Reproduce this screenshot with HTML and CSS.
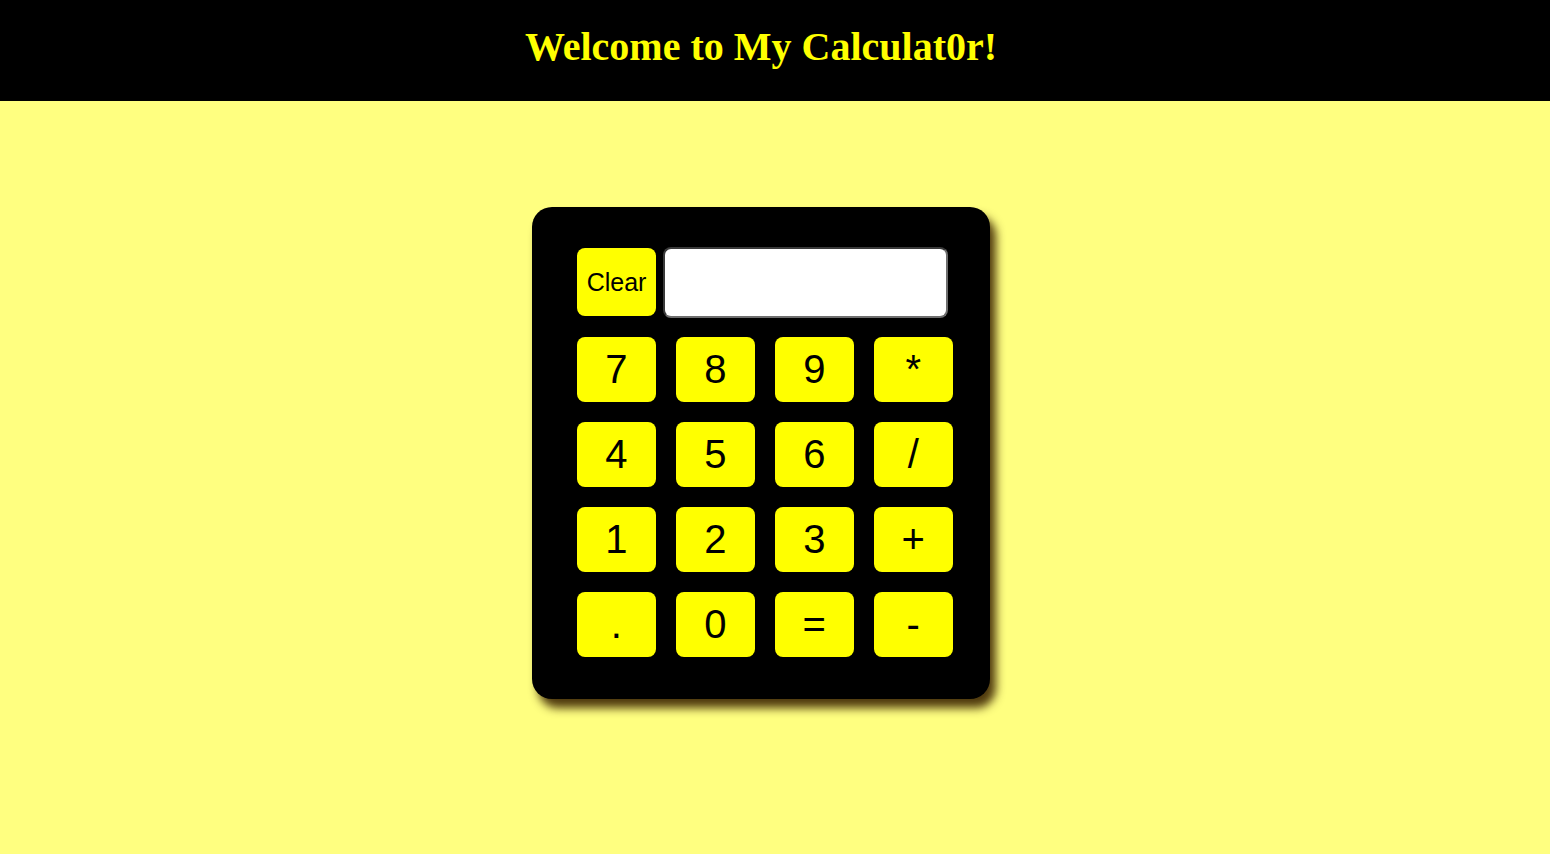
FILE: index.html
```html
<!DOCTYPE html>
<html>
<head>
<meta charset="utf-8">
<title>Calculator</title>
<link rel="stylesheet" href="styles.css">
</head>
<body>
<header class="topbar">
  <h1 class="title">Welcome to My Calculat0r!</h1>
</header>
<main class="stage">
  <div class="calc">
    <div class="top-row">
      <button class="key key-clear">Clear</button>
      <input class="display" type="text">
    </div>
    <div class="keys">
      <button class="key">7</button>
      <button class="key">8</button>
      <button class="key">9</button>
      <button class="key">*</button>
      <button class="key">4</button>
      <button class="key">5</button>
      <button class="key">6</button>
      <button class="key">/</button>
      <button class="key">1</button>
      <button class="key">2</button>
      <button class="key">3</button>
      <button class="key">+</button>
      <button class="key">.</button>
      <button class="key">0</button>
      <button class="key">=</button>
      <button class="key">-</button>
    </div>
  </div>
</main>
</body>
</html>
```
FILE: styles.css
```css
html, body {
  margin: 0;
  padding: 0;
}
body {
  background: #ffff80;
  font-family: "Liberation Sans", Arial, sans-serif;
  min-height: 854px;
}
.topbar {
  background: #000;
  height: 101px;
  box-sizing: border-box;
  padding: 24px 28px 0 0;
}
.title {
  margin: 0;
  text-align: center;
  font-family: "Liberation Serif", "Times New Roman", serif;
  font-weight: bold;
  font-size: 40px;
  line-height: 46px;
  color: #ffff00;
}
.stage {
  display: flex;
  justify-content: center;
  padding: 106px 28px 0 0;
}
.calc {
  background: #000;
  border-radius: 20px;
  width: 458px;
  height: 492px;
  box-sizing: border-box;
  padding: 40px 38px 0 45px;
  box-shadow: 6px 9px 10px rgba(60, 35, 0, 0.9);
}
.top-row {
  display: flex;
  align-items: flex-start;
  gap: 7px;
  height: 90px;
}
.key {
  background: #ffff00;
  border: none;
  border-radius: 8px;
  color: #000;
  font-family: "Liberation Sans", Arial, sans-serif;
  font-size: 40px;
  padding: 0;
  margin: 0;
  width: 79px;
  height: 65px;
}
.key-clear {
  font-size: 25px;
  height: 68px;
  margin-top: 1px;
}
.display {
  width: 285px;
  height: 71px;
  box-sizing: border-box;
  border: 2px solid;
  border-color: #3a3a3a #6e6e6e #6e6e6e #3a3a3a;
  border-radius: 8px;
  background: #fff;
  margin: 0;
  padding: 0 6px;
  font-size: 24px;
}
.keys {
  display: grid;
  grid-template-columns: repeat(4, 78.5px);
  grid-auto-rows: 65px;
  column-gap: 20.5px;
  row-gap: 20px;
}
.keys .key {
  width: 100%;
}
```
